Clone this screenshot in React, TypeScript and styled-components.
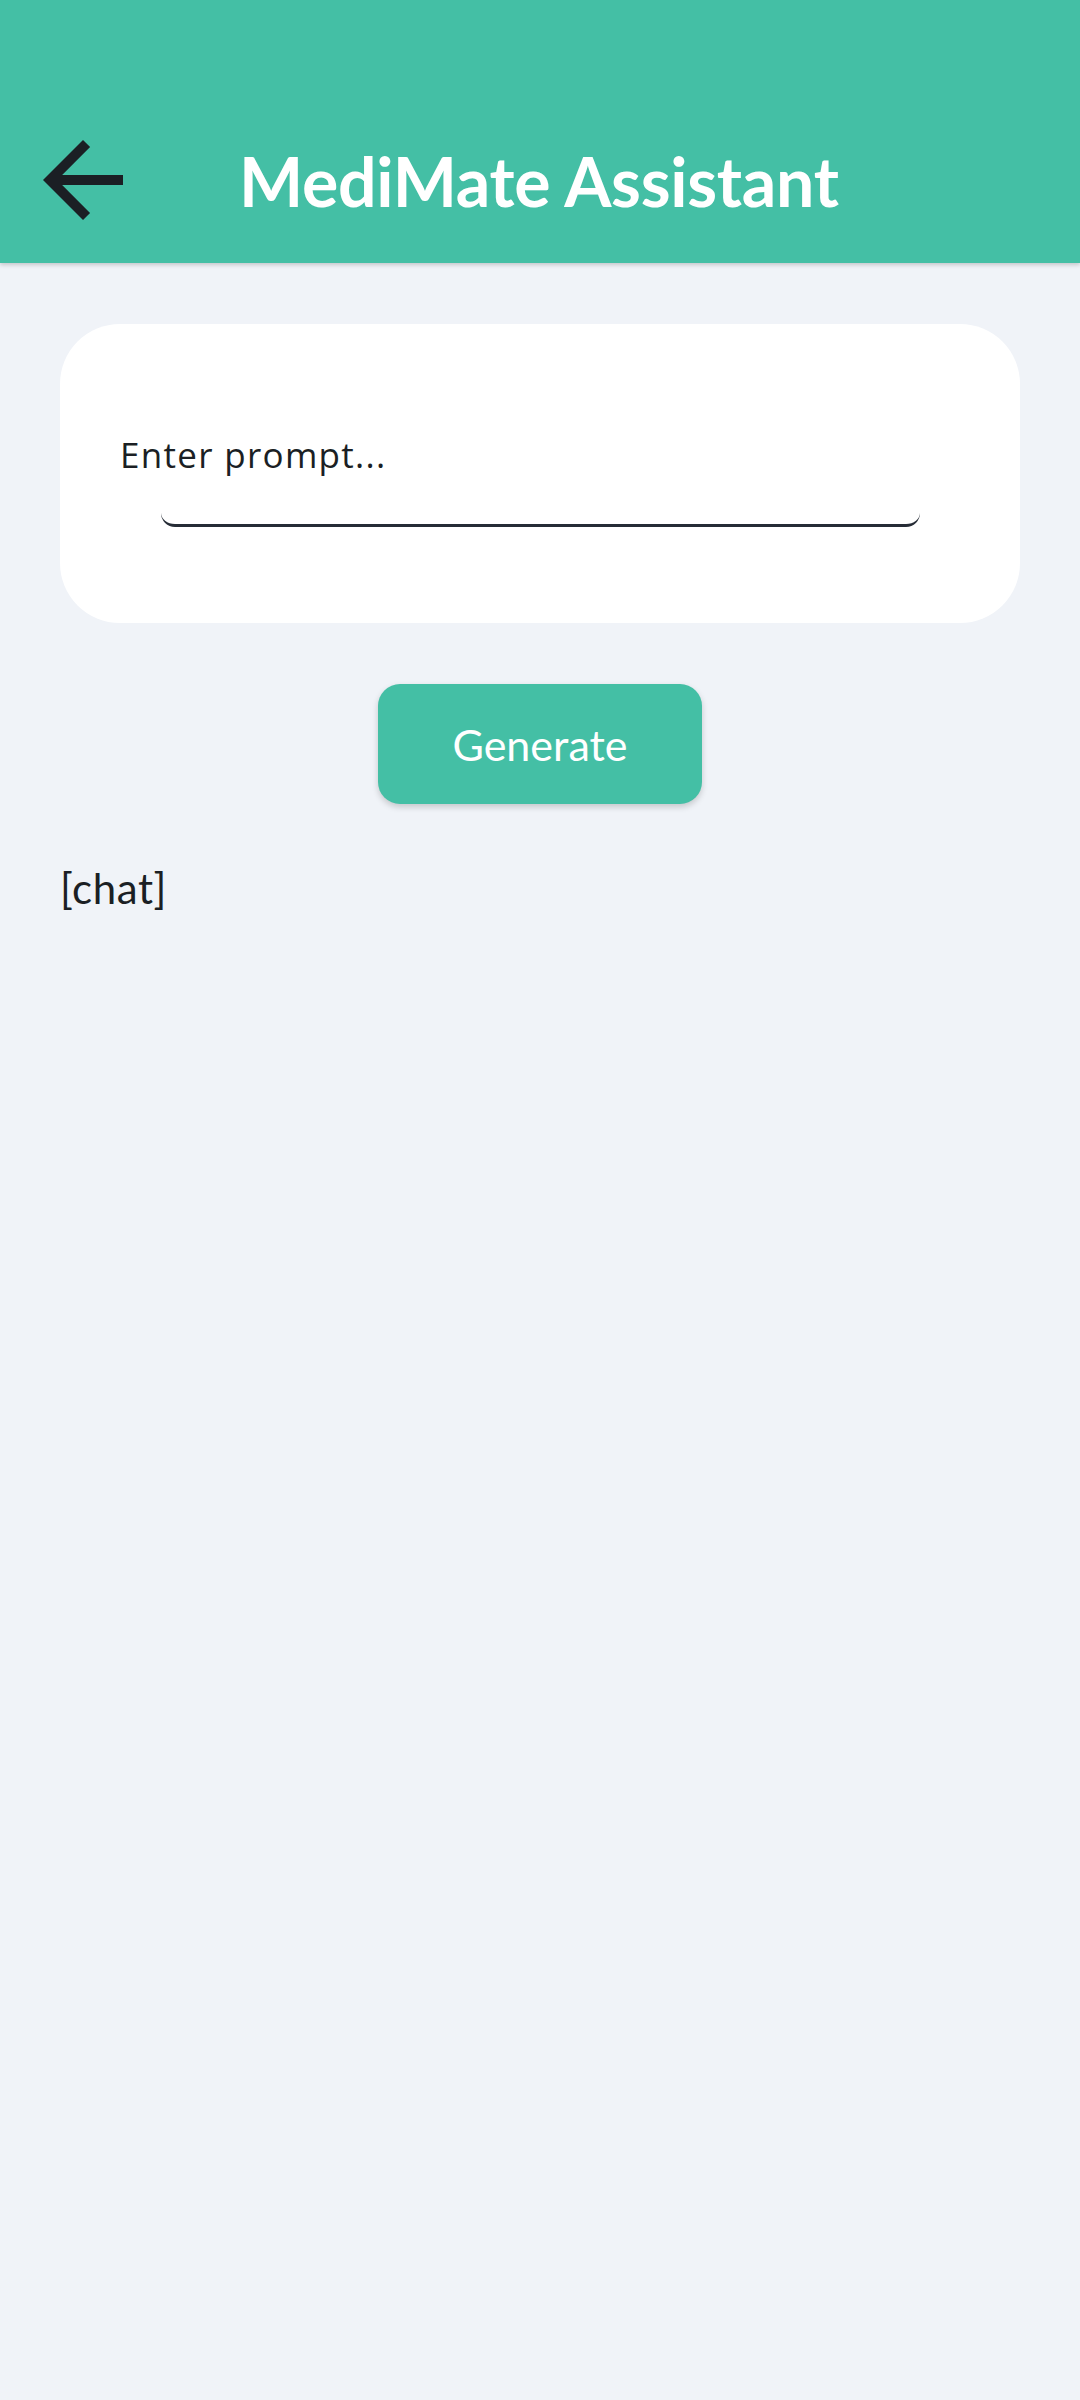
import React from "react";
import styled, { createGlobalStyle } from "styled-components";

const Global = createGlobalStyle`
  html, body { margin: 0; padding: 0; background: #f0f3f8; }
  body { font-family: "Lato", "Noto Sans", sans-serif; }
`;

const Page = styled.div`
  min-height: 2400px;
  background: #f0f3f8;
  display: flex;
  flex-direction: column;
`;

const Header = styled.header`
  height: 263px;
  background: #44bfa5;
  box-shadow: 0 2px 4px rgba(0, 0, 0, 0.18);
  display: flex;
  align-items: flex-end;
  padding: 0 0 23px 23px;
  box-sizing: border-box;
  position: relative;
  z-index: 1;
`;

const BackButton = styled.button`
  width: 120px;
  height: 120px;
  border: none;
  background: transparent;
  padding: 0;
  display: flex;
  align-items: center;
  justify-content: center;
  cursor: pointer;
`;

const Title = styled.h1`
  margin: 0 0 0 96px;
  height: 120px;
  display: flex;
  align-items: center;
  font-family: "Lato", sans-serif;
  font-weight: 700;
  font-size: 68px;
  color: #ffffff;
  letter-spacing: -0.3px;
`;

const Content = styled.main`
  display: flex;
  flex-direction: column;
  padding: 61px 60px;
  gap: 61px;
`;

const Card = styled.section`
  height: 299px;
  background: #ffffff;
  border-radius: 60px;
  box-sizing: border-box;
  padding: 111px 100px 0 60px;
  display: flex;
  flex-direction: column;
`;

const PromptLabel = styled.label`
  font-family: "Open Sans", "Noto Sans", sans-serif;
  font-size: 35px;
  color: #1b1f24;
  letter-spacing: 1.3px;
  line-height: 40px;
`;

const Underline = styled.div`
  margin: 35px 0 0 41px;
  height: 14px;
  border-bottom: 3px solid #262c36;
  border-radius: 0 0 14px 14px;
`;

const GenerateButton = styled.button`
  align-self: center;
  width: 324px;
  height: 120px;
  border: none;
  border-radius: 22px;
  background: #44bfa5;
  color: #ffffff;
  font-family: "Lato", sans-serif;
  font-size: 43px;
  font-weight: 400;
  box-shadow: 0 3px 6px rgba(0, 0, 0, 0.18);
  cursor: pointer;
`;

const ChatText = styled.div`
  font-family: "Lato", sans-serif;
  font-size: 42px;
  letter-spacing: 0.6px;
  color: #1b1f24;
  margin-top: -2px;
`;

export default function App() {
  return (
    <Page>
      <Global />
      <Header>
        <BackButton aria-label="back">
          <svg width="120" height="120" viewBox="0 0 24 24">
            <path
              d="M20 11H7.83l5.59-5.59L12 4l-8 8 8 8 1.41-1.41L7.83 13H20v-2z"
              fill="#1b1f24"
            />
          </svg>
        </BackButton>
        <Title>MediMate Assistant</Title>
      </Header>
      <Content>
        <Card>
          <PromptLabel>Enter prompt...</PromptLabel>
          <Underline />
        </Card>
        <GenerateButton>Generate</GenerateButton>
        <ChatText>[chat]</ChatText>
      </Content>
    </Page>
  );
}
